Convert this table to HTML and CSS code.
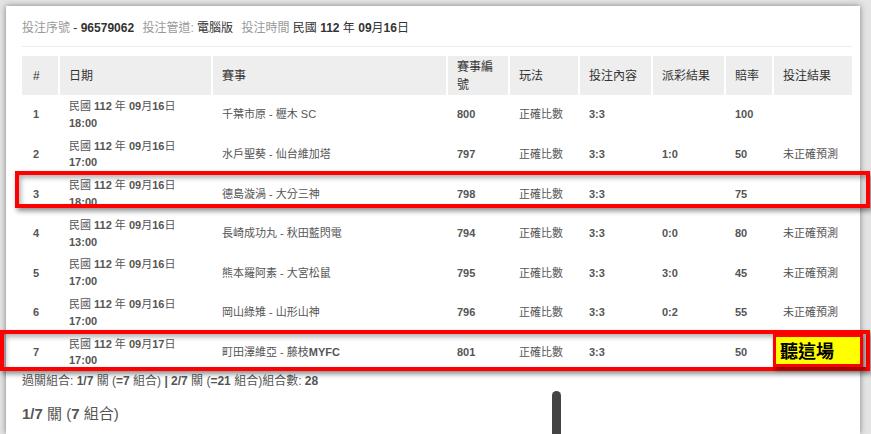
FILE: index.html
```html
<!DOCTYPE html>
<html lang="zh-Hant">
<head>
    <meta charset="UTF-8">
    <meta name="viewport" content="width=device-width, initial-scale=1.0">
    <title>投注紀錄</title>
    <link rel="stylesheet" href="styles.css">
</head>
<body>
    <div class="card">
        <!-- 注單資訊 -->
        <p class="info">
            <span class="label">投注序號</span> - <b class="val">96579062</b>
            <span class="label">投注管道:</span> <span class="val">電腦版</span>
            <span class="label">投注時間</span> <span class="val">民國 <b>112</b> 年 <b>09</b>月<b>16</b>日</span>
        </p>

        <table class="bets">
            <colgroup>
                <col style="width:36px">
                <col style="width:153px">
                <col style="width:235px">
                <col style="width:62px">
                <col style="width:70px">
                <col style="width:73px">
                <col style="width:73px">
                <col style="width:48px">
                <col style="width:80px">
            </colgroup>
            <thead>
                <tr>
                    <th>#</th>
                    <th>日期</th>
                    <th>賽事</th>
                    <th>賽事編號</th>
                    <th>玩法</th>
                    <th>投注內容</th>
                    <th>派彩結果</th>
                    <th>賠率</th>
                    <th>投注結果</th>
                </tr>
            </thead>
            <tbody>
                <tr>
                    <td class="num">1</td>
                    <td>民國 <b>112</b> 年 <b>09</b>月<b>16</b>日<br><b>18:00</b></td>
                    <td>千葉市原 - 櫪木 SC</td>
                    <td class="num">800</td>
                    <td>正確比數</td>
                    <td class="num">3:3</td>
                    <td class="num"></td>
                    <td class="num">100</td>
                    <td></td>
                </tr>
                <tr>
                    <td class="num">2</td>
                    <td>民國 <b>112</b> 年 <b>09</b>月<b>16</b>日<br><b>17:00</b></td>
                    <td>水戶聖葵 - 仙台維加塔</td>
                    <td class="num">797</td>
                    <td>正確比數</td>
                    <td class="num">3:3</td>
                    <td class="num">1:0</td>
                    <td class="num">50</td>
                    <td>未正確預測</td>
                </tr>
                <tr>
                    <td class="num">3</td>
                    <td>民國 <b>112</b> 年 <b>09</b>月<b>16</b>日<br><b>18:00</b></td>
                    <td>德島漩渦 - 大分三神</td>
                    <td class="num">798</td>
                    <td>正確比數</td>
                    <td class="num">3:3</td>
                    <td class="num"></td>
                    <td class="num">75</td>
                    <td></td>
                </tr>
                <tr>
                    <td class="num">4</td>
                    <td>民國 <b>112</b> 年 <b>09</b>月<b>16</b>日<br><b>13:00</b></td>
                    <td>長崎成功丸 - 秋田藍閃電</td>
                    <td class="num">794</td>
                    <td>正確比數</td>
                    <td class="num">3:3</td>
                    <td class="num">0:0</td>
                    <td class="num">80</td>
                    <td>未正確預測</td>
                </tr>
                <tr>
                    <td class="num">5</td>
                    <td>民國 <b>112</b> 年 <b>09</b>月<b>16</b>日<br><b>17:00</b></td>
                    <td>熊本羅阿素 - 大宮松鼠</td>
                    <td class="num">795</td>
                    <td>正確比數</td>
                    <td class="num">3:3</td>
                    <td class="num">3:0</td>
                    <td class="num">45</td>
                    <td>未正確預測</td>
                </tr>
                <tr>
                    <td class="num">6</td>
                    <td>民國 <b>112</b> 年 <b>09</b>月<b>16</b>日<br><b>17:00</b></td>
                    <td>岡山綠雉 - 山形山神</td>
                    <td class="num">796</td>
                    <td>正確比數</td>
                    <td class="num">3:3</td>
                    <td class="num">0:2</td>
                    <td class="num">55</td>
                    <td>未正確預測</td>
                </tr>
                <tr>
                    <td class="num">7</td>
                    <td>民國 <b>112</b> 年 <b>09</b>月<b>17</b>日<br><b>17:00</b></td>
                    <td>町田澤維亞 - 藤枝<b class="thin">MYFC</b></td>
                    <td class="num">801</td>
                    <td>正確比數</td>
                    <td class="num">3:3</td>
                    <td class="num"></td>
                    <td class="num">50</td>
                    <td></td>
                </tr>
            </tbody>
        </table>

        <p class="combo">過關組合: <b>1/7</b> 關 (<b>=7</b> 組合) <b>| 2/7</b> 關 (<b>=21</b> 組合)組合數: <b>28</b></p>
        <h3 class="combo-title"><b>1/7</b> 關 (<b>7</b> 組合)</h3>
    </div>

    <!-- 標註框 -->
    <div class="mark mark-row3"></div>
    <div class="mark mark-row7"></div>
    <div class="note">聽這場</div>
    <div class="drag-bar"></div>
</body>
</html>
```

FILE: styles.css
```css
html,body{
    margin: 0;
    height: 100%;
    overflow: hidden;
    background-color: #e4e4e4;
}
body{
    position: relative;
    font-family: "Liberation Sans", "Noto Sans CJK TC", sans-serif;
    color: #555;
}
.card{
    box-sizing: border-box;
    margin: 6px 11px 0 6px;
    height: calc(100% - 6px);
    overflow: hidden;
    padding: 13px 8px 0 16px;
    background-color: #fff;
    box-shadow: 0 0 6px rgba(0,0,0,.45);
}
/* 注單資訊 */
.info{
    margin: 0 0 9px;
    padding-bottom: 9px;
    border-bottom: 1px solid #ececec;
    font-size: 12px;
    line-height: 18px;
    color: #333;
}
.info .label{
    color: #999;
}
.info .val{
    margin-right: 5px;
}
/* 表格 */
.bets{
    width: 830px;
    table-layout: fixed;
    border-collapse: separate;
    border-spacing: 0;
}
.bets th{
    height: 39px;
    padding: 0 6px 0 9px;
    box-sizing: border-box;
    background-color: #eee;
    border-left: 2px solid #fff;
    font-size: 12px;
    line-height: 18px;
    font-weight: normal;
    color: #333;
    text-align: left;
    vertical-align: middle;
}
.bets th:first-child{
    border-left: 0;
    padding-left: 11px;
}
.bets td{
    padding: 3px 6px 3px 11px;
    font-size: 11px;
    line-height: 16.8px;
    color: #555;
    vertical-align: middle;
}
.bets td.num{
    font-weight: bold;
}
.bets td b.thin{
    font-weight: 600;
}
.combo{
    margin: 1px 0 0;
    font-size: 12px;
    line-height: 17px;
    color: #555;
}
.combo-title{
    margin: 14px 0 0;
    font-size: 15px;
    line-height: 20px;
    font-weight: normal;
    color: #555;
}
/* 紅色標註框 */
.mark{
    position: absolute;
    box-sizing: border-box;
    border: 4px solid #f00;
    box-shadow: 2px 3px 5px rgba(0,0,0,.45), inset 2px 3px 5px rgba(0,0,0,.3);
}
.mark-row3{
    left: 15px;
    top: 171px;
    width: 855px;
    height: 37px;
}
.mark-row7{
    left: 0;
    top: 330px;
    width: 870px;
    height: 41px;
}
.note{
    position: absolute;
    left: 773px;
    top: 334px;
    width: 90px;
    height: 33px;
    box-sizing: border-box;
    padding-left: 4px;
    border: 3px solid #f00;
    background-color: #ff0;
    box-shadow: 2px 3px 4px rgba(0,0,0,.5);
    font-family: "Noto Sans CJK TC", sans-serif;
    font-size: 18px;
    font-weight: bold;
    line-height: 27px;
    color: #000;
}
.drag-bar{
    position: absolute;
    left: 552px;
    top: 391px;
    width: 9px;
    height: 43px;
    border-radius: 5px 5px 0 0;
    background-color: #444;
}
```
